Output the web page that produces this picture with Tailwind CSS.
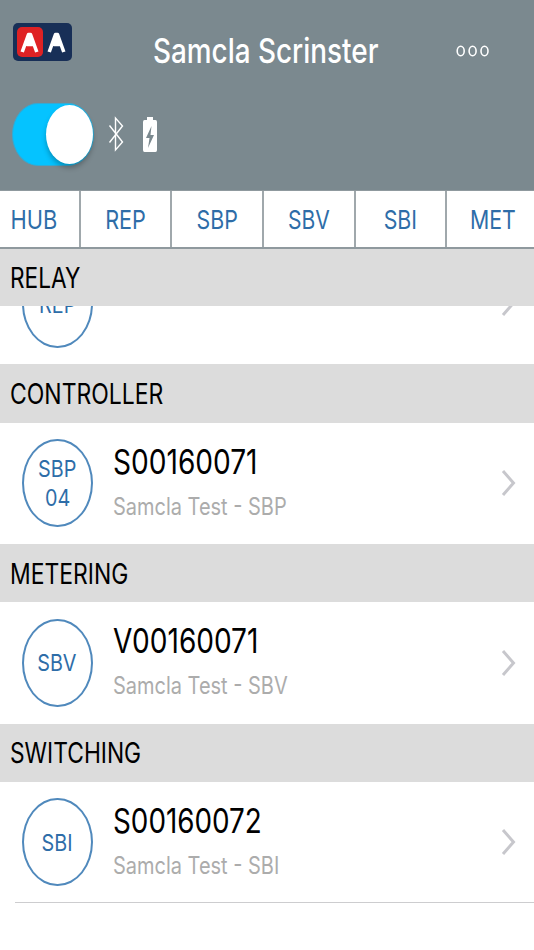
<!DOCTYPE html>
<html lang="en">
<head>
  <meta charset="UTF-8" />
  <meta name="viewport" content="width=device-width, initial-scale=1.0" />
  <title>Samcla Scrinster</title>
  <script src="https://cdn.jsdelivr.net/npm/@tailwindcss/browser@4"></script>
</head>
<body class="bg-white font-['Inter','Liberation_Sans',sans-serif] overflow-hidden">

  <!-- Header -->
  <header class="h-[190px] bg-[#7b898f] overflow-hidden">
    <div class="flex items-center h-[102px]">
      <div class="flex items-center w-[59px] h-[38px] ml-[13px] mb-[18px] rounded-[5px] bg-[#182f57] p-[4px]">
        <div class="flex items-center justify-center w-[27px] h-[30px] rounded-[5px] bg-[#df2224]">
          <svg class="w-[19px] h-[21px]" viewBox="0 0 19 21" fill="none" stroke="#fff" stroke-width="3.6" stroke-linejoin="round"><path d="M2.200 20 8.500 2.500h2L16.800 20M7 12.500 9.500 6l2.500 6.500z" /></svg>
        </div>
        <div class="flex items-center justify-center w-[24px] h-[30px] ml-[2px]">
          <svg class="w-[19px] h-[21px]" viewBox="0 0 19 21" fill="none" stroke="#fff" stroke-width="3.6" stroke-linejoin="round"><path d="M2.200 20 8.500 2.500h2L16.800 20M7 12.500 9.500 6l2.500 6.500z" /></svg>
        </div>
      </div>
      <h1 class="w-[226px] ml-[80.5px] text-[34px] leading-[44px] font-medium text-white whitespace-nowrap origin-left scale-x-[0.82]">Samcla Scrinster</h1>
      <svg class="w-[36px] h-[14px] ml-[76.5px]" viewBox="0 0 36 14" fill="none" stroke="#fff" stroke-width="1.6">
        <ellipse cx="5.700" cy="7" rx="3.500" ry="4.700" />
        <ellipse cx="17.600" cy="7" rx="3.500" ry="4.700" />
        <ellipse cx="29.500" cy="7" rx="3.500" ry="4.700" />
      </svg>
    </div>
    <div class="flex items-center h-[64px] pl-[12px]">
      <div class="flex items-center justify-end w-[82px] h-[63px] rounded-[26px/31.5px] bg-[#05c3ff] border border-[#35a9d2]">
        <div class="w-[47px] h-[59px] rounded-[50%] bg-white shadow-[0_4px_5px_rgba(0,0,0,0.25)]"></div>
      </div>
      <svg class="w-[16px] h-[36px] ml-[14px]" viewBox="0 0 16 36" fill="none" stroke="#fff" stroke-width="1.4"><path d="M1.500 9.500 14.500 26 7.500 34V2L14.500 10 1.500 26.500" /></svg>
      <svg class="w-[16px] h-[36px] ml-[18px]" viewBox="0 0 16 36"><path fill="#fff" d="M5 1h6v3h2.500q1.500 0 1.500 2v28q0 2-1.500 2h-11Q1 36 1 34V6q0-2 1.500-2H5z" /><path fill="#7b898f" d="M9.500 10 4 22h3.500L6 32l6-13H8.500z" /></svg>
    </div>
  </header>

  <!-- Device tabs -->
  <nav class="h-[59px] border-t border-b-2 border-[#8f999e] overflow-hidden text-[26px] text-[#2e6da8]">
    <div class="flex h-full w-[550px] -ml-[11px]">
      <div class="flex items-center justify-center w-[91.7px] border-r-2 border-[#a0a8ac]"><span class="scale-x-[0.84]">HUB</span></div>
      <div class="flex items-center justify-center w-[91.7px] border-r-2 border-[#a0a8ac]"><span class="scale-x-[0.83]">REP</span></div>
      <div class="flex items-center justify-center w-[91.7px] border-r-2 border-[#a0a8ac]"><span class="scale-x-[0.82]">SBP</span></div>
      <div class="flex items-center justify-center w-[91.7px] border-r-2 border-[#a0a8ac]"><span class="scale-x-[0.81]">SBV</span></div>
      <div class="flex items-center justify-center w-[91.7px] border-r-2 border-[#a0a8ac]"><span class="scale-x-[0.82]">SBI</span></div>
      <div class="flex items-center justify-center w-[91.7px]"><span class="scale-x-[0.82]">MET</span></div>
    </div>
  </nav>

  <!-- Device list -->
  <main>
    <h2 class="flex items-center h-[57px] pl-[10px] bg-[#dcdcdc] text-[28px] text-black"><span class="origin-left scale-x-[0.81]">RELAY</span></h2>
    <!-- Row scrolled half under its section title -->
    <div class="flex items-end h-[58px] overflow-hidden">
      <div class="flex items-center w-full h-[121px] shrink-0 pl-[22px] pr-[18px]">
        <div class="flex items-center justify-center w-[70.5px] h-[88px] rounded-[50%] border-2 border-[#5089bc] text-[23px] text-[#2e6da8]"><span class="pt-[3px] scale-x-[0.86]">REP</span></div>
        <svg class="w-[15px] h-[28px] ml-auto mb-[2px]" viewBox="0 0 15 28" fill="none" stroke="#c7c7cc" stroke-width="3"><path d="M2 2l10.500 12L2 26" /></svg>
      </div>
    </div>

    <h2 class="flex items-center h-[58.5px] pl-[10px] pt-[1px] bg-[#dcdcdc] text-[28px] text-black"><span class="origin-left scale-x-[0.82]">CONTROLLER</span></h2>
    <div class="flex items-center h-[121.5px] pl-[22px] pr-[18px]">
      <div class="flex flex-col items-center justify-center w-[70.5px] h-[88px] rounded-[50%] border-2 border-[#5089bc] pt-[1px] text-[23px] leading-[29px] text-[#2e6da8]"><span class="scale-x-[0.86]">SBP</span><span class="scale-x-[0.86]">04</span></div>
      <div class="ml-[20px] mt-[2px] whitespace-nowrap">
        <p class="text-[34px] leading-[44px] text-black origin-left scale-x-[0.826]">S00160071</p>
        <p class="text-[24px] leading-[45px] text-[#acacac] origin-left scale-x-[0.832]">Samcla Test - SBP</p>
      </div>
      <svg class="w-[15px] h-[28px] ml-auto" viewBox="0 0 15 28" fill="none" stroke="#c7c7cc" stroke-width="3"><path d="M2 2l10.500 12L2 26" /></svg>
    </div>

    <h2 class="flex items-center h-[58px] pl-[10px] pt-[1px] bg-[#dcdcdc] text-[28px] text-black"><span class="origin-left scale-x-[0.818]">METERING</span></h2>
    <div class="flex items-center h-[121.5px] pl-[22px] pr-[18px]">
      <div class="flex items-center justify-center w-[70.5px] h-[88px] rounded-[50%] border-2 border-[#5089bc] pt-[1px] text-[23px] text-[#2e6da8]"><span class="scale-x-[0.86]">SBV</span></div>
      <div class="ml-[20px] mt-[2px] whitespace-nowrap">
        <p class="text-[34px] leading-[44px] text-black origin-left scale-x-[0.825]">V00160071</p>
        <p class="text-[24px] leading-[45px] text-[#acacac] origin-left scale-x-[0.832]">Samcla Test - SBV</p>
      </div>
      <svg class="w-[15px] h-[28px] ml-auto" viewBox="0 0 15 28" fill="none" stroke="#c7c7cc" stroke-width="3"><path d="M2 2l10.500 12L2 26" /></svg>
    </div>

    <h2 class="flex items-center h-[58px] pl-[10px] bg-[#dcdcdc] text-[28px] text-black"><span class="origin-left scale-x-[0.814]">SWITCHING</span></h2>
    <div class="flex items-center h-[120.5px] pl-[22px] pr-[18px]">
      <div class="flex items-center justify-center w-[70.5px] h-[88px] rounded-[50%] border-2 border-[#5089bc] pt-[2px] text-[23px] text-[#2e6da8]"><span class="scale-x-[0.86]">SBI</span></div>
      <div class="ml-[20px] mt-[3px] whitespace-nowrap">
        <p class="text-[34px] leading-[44px] text-black origin-left scale-x-[0.818]">S00160072</p>
        <p class="text-[24px] leading-[45px] text-[#acacac] origin-left scale-x-[0.832]">Samcla Test - SBI</p>
      </div>
      <svg class="w-[15px] h-[28px] ml-auto" viewBox="0 0 15 28" fill="none" stroke="#c7c7cc" stroke-width="3"><path d="M2 2l10.500 12L2 26" /></svg>
    </div>
    <div class="ml-[15px] border-t border-[#cdcdcf]"></div>
  </main>

</body>
</html>
